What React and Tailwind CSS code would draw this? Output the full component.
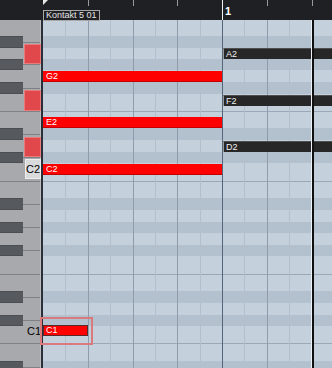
import React from 'react';

// one octave = 14 slots: 12 keys plus the E/F and B/C gaps
const ROWS = [
  [16, 'w'], [12, 'b'], [11, 'w'], [11, 'b'], [12, 'w'], [12, 'b'], [11, 'w'], [12, 'g'],
  [11, 'w'], [12, 'b'], [12, 'w'], [11, 'b'], [12, 'w'], [12, 'g'], [11, 'w'], [12, 'b'],
  [12, 'w'], [11, 'b'], [12, 'w'], [11, 'b'], [12, 'w'], [12, 'g'], [11, 'w'], [12, 'b'],
  [12, 'w'], [11, 'b'], [12, 'w'], [11, 'g'], [12, 'w'], [12, 'b'],
];

const H = { 16: 'h-[16px]', 12: 'h-[12px]', 11: 'h-[11px]' };

const COLS = Array.from({ length: 14 }, (_, i) => i);

const colClass = (i) => {
  if (i === 0) return '';
  if (i === 8) return 'border-l border-[#56667a]';
  if (i % 2 === 0) return 'border-l border-[#8e9cac]';
  return 'border-l border-[#b2bfcc]';
};

const TICKS = ['left-[45px]', 'left-[90px]', 'left-[134px]', 'left-[224px]', 'left-[269px]'];

const GridRow = ({ h, t }) => {
  if (t === 'g') {
    return (
      <div className={`${H[h]} bg-[#c4d0dc] flex items-center`}>
        <div className="h-px w-full bg-[#9aa8b7]" />
      </div>
    );
  }
  return <div className={`${H[h]} ${t === 'b' ? 'bg-[#b3c1ce]' : 'bg-[#c4d0dc]'}`} />;
};

const KeyRow = ({ h, t }) => {
  if (t === 'b') {
    return (
      <div className={`${H[h]} flex`}>
        <div className="w-[23px] bg-[#56595d] border-y border-[#4a4d51]" />
        <div className="flex-1 flex items-center">
          <div className="h-px w-full bg-[#7f8184]" />
        </div>
      </div>
    );
  }
  if (t === 'g') {
    return (
      <div className={`${H[h]} flex items-center`}>
        <div className="h-px w-full bg-[#7f8184]" />
      </div>
    );
  }
  return <div className={H[h]} />;
};

const RedNote = ({ label, className }) => (
  <div className={`absolute h-[11px] bg-[#ff0000] border-b border-[#c20000] flex items-center pl-[3px] text-[9px] leading-none text-white ${className}`}>
    {label}
  </div>
);

const DarkNote = ({ label, className }) => (
  <div className={`absolute left-[180px] right-[-10px] h-[11px] bg-[#272727] border-t border-[#4e4e4e] border-l border-l-[#9a9a9a] flex items-center pl-[2px] text-[9px] leading-none text-[#f0f0f0] ${className}`}>
    {label}
  </div>
);

export default function App() {
  return (
    <div className="w-[332px] h-[368px] overflow-hidden bg-[#c4d0dc] font-['Liberation_Sans',Arial,sans-serif] select-none">
      {/* ruler */}
      <div className="h-[20px] flex bg-[#1f2023]">
        <div className="w-[43px] shrink-0" />
        <div className="flex-1 relative">
          <svg className="absolute left-0 top-0" width="6" height="6" viewBox="0 0 6 6">
            <polygon points="0,0 5,0 0,5" fill="#e8e8e8" />
          </svg>
          {TICKS.map((t) => (
            <div key={t} className={`absolute top-0 h-[6px] w-px bg-[#9a9a9a] ${t}`} />
          ))}
          <div className="absolute left-[179px] top-0 h-full w-px bg-[#f2f2f2]" />
          <div className="absolute left-[182px] top-[6px] text-[11px] font-bold leading-none text-white">1</div>
          <div className="absolute left-0 top-[10px] h-[11px] w-[57px] border border-[#a8a8a8] bg-[#1f2023] flex items-center pl-[2px] text-[9px] leading-none text-[#e4e4e4] z-10">
            Kontakt 5 01
          </div>
        </div>
      </div>

      {/* body */}
      <div className="relative h-[348px] flex overflow-hidden">
        {/* keyboard */}
        <div className="relative w-[41px] shrink-0 bg-[#a8a9ac] border-r border-[#bcbdbf]">
          {ROWS.map(([h, t], i) => (
            <KeyRow key={i} h={h} t={t} />
          ))}
          <div className="absolute left-[24px] top-[24px] w-[17px] h-[20px] bg-[#e0484b] border border-[#ea7a7c]" />
          <div className="absolute left-[24px] top-[70px] w-[17px] h-[21px] bg-[#e0484b] border border-[#ea7a7c]" />
          <div className="absolute left-[24px] top-[117px] w-[17px] h-[20px] bg-[#e0484b] border border-[#ea7a7c]" />
          <div className="absolute left-[25px] top-[139px] w-[16px] h-[20px] bg-[#d9dadc] border border-[#eeeeef] flex items-center justify-center text-[11px] leading-none text-black">
            C2
          </div>
          <div className="absolute left-[27px] top-[306px] text-[11px] leading-none text-black">C1</div>
        </div>
        <div className="w-[2px] shrink-0 bg-[#2b2f3a]" />

        {/* grid */}
        <div className="relative flex-1 overflow-hidden">
          {ROWS.map(([h, t], i) => (
            <GridRow key={i} h={h} t={t} />
          ))}
          <div className="absolute inset-0 flex">
            {COLS.map((i) => (
              <div key={i} className={`w-[22.375px] shrink-0 h-full ${colClass(i)}`} />
            ))}
          </div>

          <RedNote label="G2" className="left-0 w-[179px] top-[51px]" />
          <RedNote label="E2" className="left-0 w-[179px] top-[97px]" />
          <RedNote label="C2" className="left-0 w-[179px] top-[144px]" />
          <div className="absolute left-0 top-[305px] w-[45px] h-[11px] bg-[#ff0000] border border-[#5a2a2a] flex items-center pl-[2px] text-[9px] leading-none text-white">
            C1
          </div>

          <DarkNote label="A2" className="top-[28px]" />
          <DarkNote label="F2" className="top-[75px]" />
          <DarkNote label="D2" className="top-[121px]" />

          {/* cursor */}
          <div className="absolute top-0 bottom-0 left-[268px] w-px bg-[#eef2f6]" />
          <div className="absolute top-0 bottom-0 left-[269px] w-[2px] bg-[#101010]" />
        </div>

        {/* selection frame */}
        <div className="absolute left-[40px] top-[297px] w-[53px] h-[28px] border-2 border-[#d97a7d]" />
      </div>
    </div>
  );
}
